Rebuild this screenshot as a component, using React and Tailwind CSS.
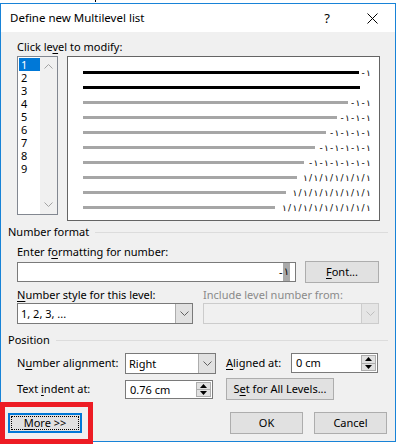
import clsx from "clsx";

const lines = [
	{ w: 276, color: "bg-black", text: "-١" },
	{ w: 277, color: "bg-black", text: "" },
	{ w: 265, color: "bg-[#a6a6a6]", text: "-١-١" },
	{ w: 254, color: "bg-[#a6a6a6]", text: "-١-١-١" },
	{ w: 243, color: "bg-[#a6a6a6]", text: "-١-١-١-١" },
	{ w: 232, color: "bg-[#a6a6a6]", text: "-١-١-١-١-١" },
	{ w: 221, color: "bg-[#a6a6a6]", text: "-١-١-١-١-١-١" },
	{ w: 214, color: "bg-[#a6a6a6]", text: "١/١/١/١/١/١/١" },
	{ w: 203, color: "bg-[#a6a6a6]", text: "١/١/١/١/١/١/١/١" },
	{ w: 192, color: "bg-[#a6a6a6]", text: "١/١/١/١/١/١/١/١/١" },
];

const levels = ["1", "2", "3", "4", "5", "6", "7", "8", "9"];

function Key({ children }) {
	return <span className="underline underline-offset-[2px]">{children}</span>;
}

function Chevron({ up, className }) {
	return (
		<svg width="9" height="5" viewBox="0 0 9 5" className={className}>
			<path
				d={up ? "M0.5 4.5 L4.5 0.5 L8.5 4.5" : "M0.5 0.5 L4.5 4.5 L8.5 0.5"}
				fill="none"
				stroke="currentColor"
				strokeWidth="1"
			/>
		</svg>
	);
}

function Arrow({ up }) {
	return (
		<svg width="7" height="4" viewBox="0 0 7 4">
			<path d={up ? "M0 4 L3.5 0 L7 4 Z" : "M0 0 L3.5 4 L7 0 Z"} fill="#000" />
		</svg>
	);
}

function Select({ value, disabled, className }) {
	return (
		<div
			className={clsx(
				"flex h-[21px] border",
				disabled ? "border-[#cccccc] bg-[#f0f0f0]" : "border-[#7a7a7a] bg-white",
				className,
			)}
		>
			<div className="flex-1 pl-[3px] leading-[19px]">{value}</div>
			<div
				className={clsx(
					"flex w-[17px] items-center justify-center border-l",
					disabled
						? "border-[#cccccc] bg-[#e5e5e5] text-[#bfbfbf]"
						: "border-[#adadad] bg-[#e1e1e1] text-[#606060]",
				)}
			>
				<Chevron />
			</div>
		</div>
	);
}

function Spin({ value, className }) {
	return (
		<div className={clsx("flex border border-[#7a7a7a] bg-white", className)}>
			<div className="flex-1 pl-[4px] leading-[18px]">{value}</div>
			<div className="flex w-[16px] flex-col py-[1px] pr-[1px]">
				<div className="flex flex-1 items-center justify-center border border-[#adadad] bg-[#e1e1e1]">
					<Arrow up />
				</div>
				<div className="flex flex-1 items-center justify-center border border-t-0 border-[#adadad] bg-[#e1e1e1]">
					<Arrow />
				</div>
			</div>
		</div>
	);
}

function Btn({ children, className }) {
	return (
		<div
			className={clsx(
				"flex h-[22px] items-center justify-center border border-[#adadad] bg-[#e1e1e1]",
				className,
			)}
		>
			{children}
		</div>
	);
}

function Group({ title }) {
	return (
		<div className="flex h-[16px] items-center pr-[7px] pl-[7px]">
			<span>{title}</span>
			<div className="ml-[6px] h-px flex-1 bg-[#dcdcdc]" />
		</div>
	);
}

export default function App() {
	return (
		<div className="relative h-[444px] w-[396px] overflow-hidden bg-white font-['Noto_Sans',sans-serif] text-[11px] leading-[16px] whitespace-nowrap text-black">
			<div className="h-[3px] pl-[95px]">
				<div className="h-[2px] w-px bg-black" />
			</div>

			<div className="flex h-[439px] flex-col border border-[#1883d7]">
				{/* title bar */}
				<div className="flex h-[28px] shrink-0 items-center bg-white pl-[9px] text-[11.5px]">
					<span className="flex-1">Define new Multilevel list</span>
					<span className="mr-[37px] text-[13px]">?</span>
					<svg width="11" height="11" viewBox="0 0 11 11" className="mr-[17px]">
						<path d="M0.5 0.5 L10.5 10.5 M10.5 0.5 L0.5 10.5" stroke="#000" strokeWidth="1" />
					</svg>
				</div>

				<div className="flex-1 bg-[#f0f0f0] pt-[7px]">
					<div className="pl-[16px]">
						Click le<Key>v</Key>el to modify:
					</div>

					<div className="mt-[1px] flex items-start gap-[9px] pl-[16px]">
						{/* level list */}
						<div className="flex h-[159px] w-[41px] border border-[#828790] bg-white">
							<div className="flex w-[22px] flex-col pt-[1px] pl-[1px]">
								{levels.map((l, i) => (
									<div
										key={l}
										className={clsx(
											"h-[13px] overflow-hidden pl-[2px] text-[11px] leading-[13px]",
											i === 0 && "bg-[#0078d7] text-white",
										)}
									>
										{l}
									</div>
								))}
							</div>
							<div className="flex flex-1 flex-col items-center justify-between bg-[#f0f0f0] py-[7px] text-[#a3a3a3]">
								<Chevron up />
								<Chevron />
							</div>
						</div>

						{/* preview */}
						<div className="h-[165px] w-[313px] border border-[#646464] bg-white pt-[8px] pr-[8px] pl-[15px]">
							{lines.map((ln, i) => (
								<div key={i} className="flex h-[15px] items-center">
									<div className={clsx("h-[3px]", ln.color)} style={{ width: ln.w }} />
									<div className="flex flex-1 justify-end font-['DejaVu_Sans',sans-serif] text-[9px]">
										{ln.text.split("").map((c, j) => (
											<span key={j} className="inline-block w-[5.25px] text-center">
												{c}
											</span>
										))}
									</div>
								</div>
							))}
						</div>
					</div>

					<div className="mt-[3px]">
						<Group title="Number format" />
					</div>

					<div className="mt-[4px] pl-[16px]">
						Enter f<Key>o</Key>rmatting for number:
					</div>

					<div className="mt-[1px] flex h-[22px] items-center gap-[9px] pl-[16px]">
						<div className="flex h-[20px] w-[279px] items-stretch justify-end border border-[#7a7a7a] bg-white pr-[5px]">
							<span className="leading-[18px]">-</span>
							<span className="bg-[#a9a9a9] px-px font-['DejaVu_Sans',sans-serif] text-[10px] leading-[18px]">
								١
							</span>
						</div>
						<Btn className="w-[74px]">
							<span>
								<Key>F</Key>ont...
							</span>
						</Btn>
					</div>

					<div className="mt-[4px] flex pl-[16px]">
						<div className="w-[186px]">
							<Key>N</Key>umber style for this level:
						</div>
						<div className="text-[#8a8a8a]">Include level number from:</div>
					</div>

					<div className="flex gap-[10px] pl-[16px]">
						<Select value="1, 2, 3, ..." className="w-[176px]" />
						<Select disabled className="w-[176px]" />
					</div>

					<div className="mt-[8px]">
						<Group title="Position" />
					</div>

					<div className="mt-[4px] flex h-[22px] items-center pl-[16px]">
						<div className="w-[108px]">
							N<Key>u</Key>mber alignment:
						</div>
						<Select value="Right" className="w-[91px]" />
						<div className="ml-[10px] w-[65px]">
							<Key>A</Key>ligned at:
						</div>
						<Spin value="0 cm" className="h-[20px] w-[87px]" />
					</div>

					<div className="mt-[4px] flex h-[22px] items-center pl-[16px]">
						<div className="w-[108px]">
							Text <Key>i</Key>ndent at:
						</div>
						<Spin value="0.76 cm" className="h-[19px] w-[88px]" />
						<Btn className="ml-[13px] w-[108px]">
							<span>
								S<Key>e</Key>t for All Levels...
							</span>
						</Btn>
					</div>

					<div className="mt-[12px] flex items-center pl-[7px]">
						<div className="h-[20px] w-[74px] border-2 border-[#0078d7] bg-[#e1e1e1] p-px">
							<div className="flex h-full items-center justify-center border border-dotted border-black">
								<span>
									<Key>M</Key>ore &gt;&gt;
								</span>
							</div>
						</div>
						<Btn className="ml-[148px] w-[73px]">OK</Btn>
						<Btn className="ml-[11px] w-[73px]">Cancel</Btn>
					</div>
				</div>
			</div>

			{/* red annotation box */}
			<div className="absolute top-[402px] left-0 h-[42px] w-[93px] border-[5px] border-[#ed1c24]" />
		</div>
	);
}
